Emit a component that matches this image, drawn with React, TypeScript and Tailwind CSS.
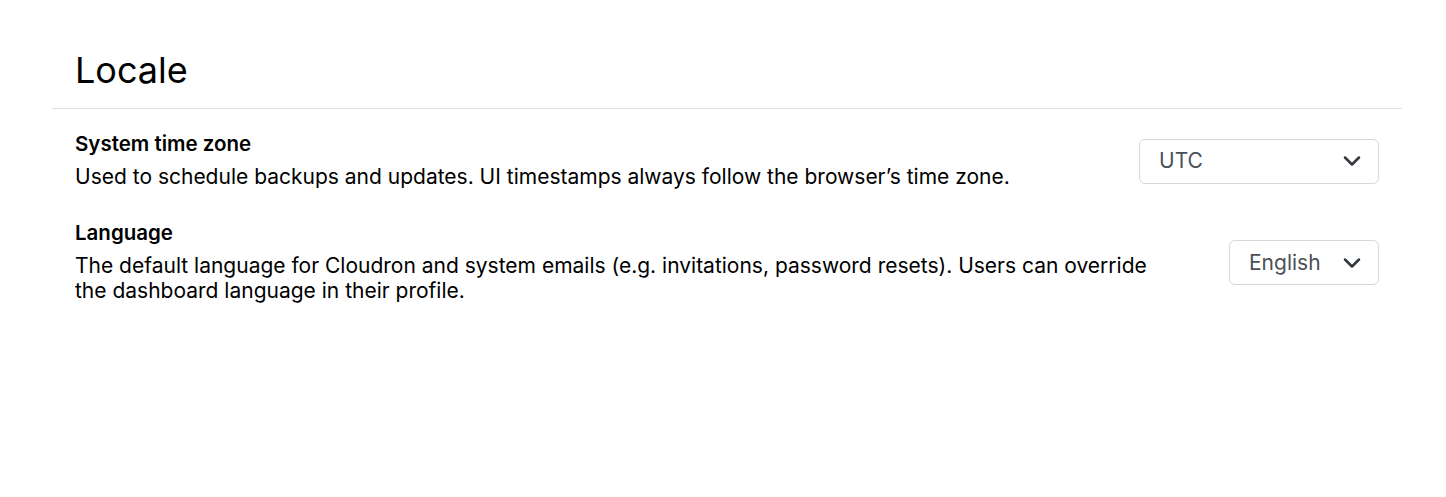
import { ChevronDown } from "lucide-react"

const Select = ({ value, width }: { value: string; width: string }) => {
  return (
    <div
      className={`${width} h-[45px] mt-[3px] shrink-0 flex items-center justify-between pl-[19px] pr-[12px] border border-[#d5d9de] rounded-[6px] bg-white`}
    >
      <span className="text-[21px] text-[#4a5057]">{value}</span>
      <ChevronDown className="w-[28px] h-[28px] text-[#343a40]" strokeWidth={2.2} />
    </div>
  )
}

const App = () => {
  return (
    <div className="w-[1446px] h-[497px] bg-white font-['Inter','Noto_Sans',sans-serif] text-black">
      <div className="ml-[52px] w-[1350px] pt-[48px]">
        <h1 className="px-[23px] text-[36px] leading-[44px] font-normal pb-[16px] border-b border-[#dee2e6]">
          Locale
        </h1>
        <div className="px-[23px] pt-[21px] flex flex-col gap-[30px]">
          <div className="flex items-center justify-between gap-[40px]">
            <div className="flex flex-col">
              <span className="text-[20.5px] leading-[28px] font-semibold">System time zone</span>
              <span className="text-[21px] leading-[25px] mt-[6px]">
                Used to schedule backups and updates. UI timestamps always follow the browser’s time zone.
              </span>
            </div>
            <Select value="UTC" width="w-[240px]" />
          </div>
          <div className="flex items-center justify-between gap-[40px]">
            <div className="flex flex-col max-w-[1100px]">
              <span className="text-[20.5px] leading-[28px] font-semibold">Language</span>
              <span className="text-[21px] leading-[25px] mt-[6px]">
                The default language for Cloudron and system emails (e.g. invitations, password resets). Users can override the dashboard language in their profile.
              </span>
            </div>
            <Select value="English" width="w-[150px]" />
          </div>
        </div>
      </div>
    </div>
  )
}

export default App
